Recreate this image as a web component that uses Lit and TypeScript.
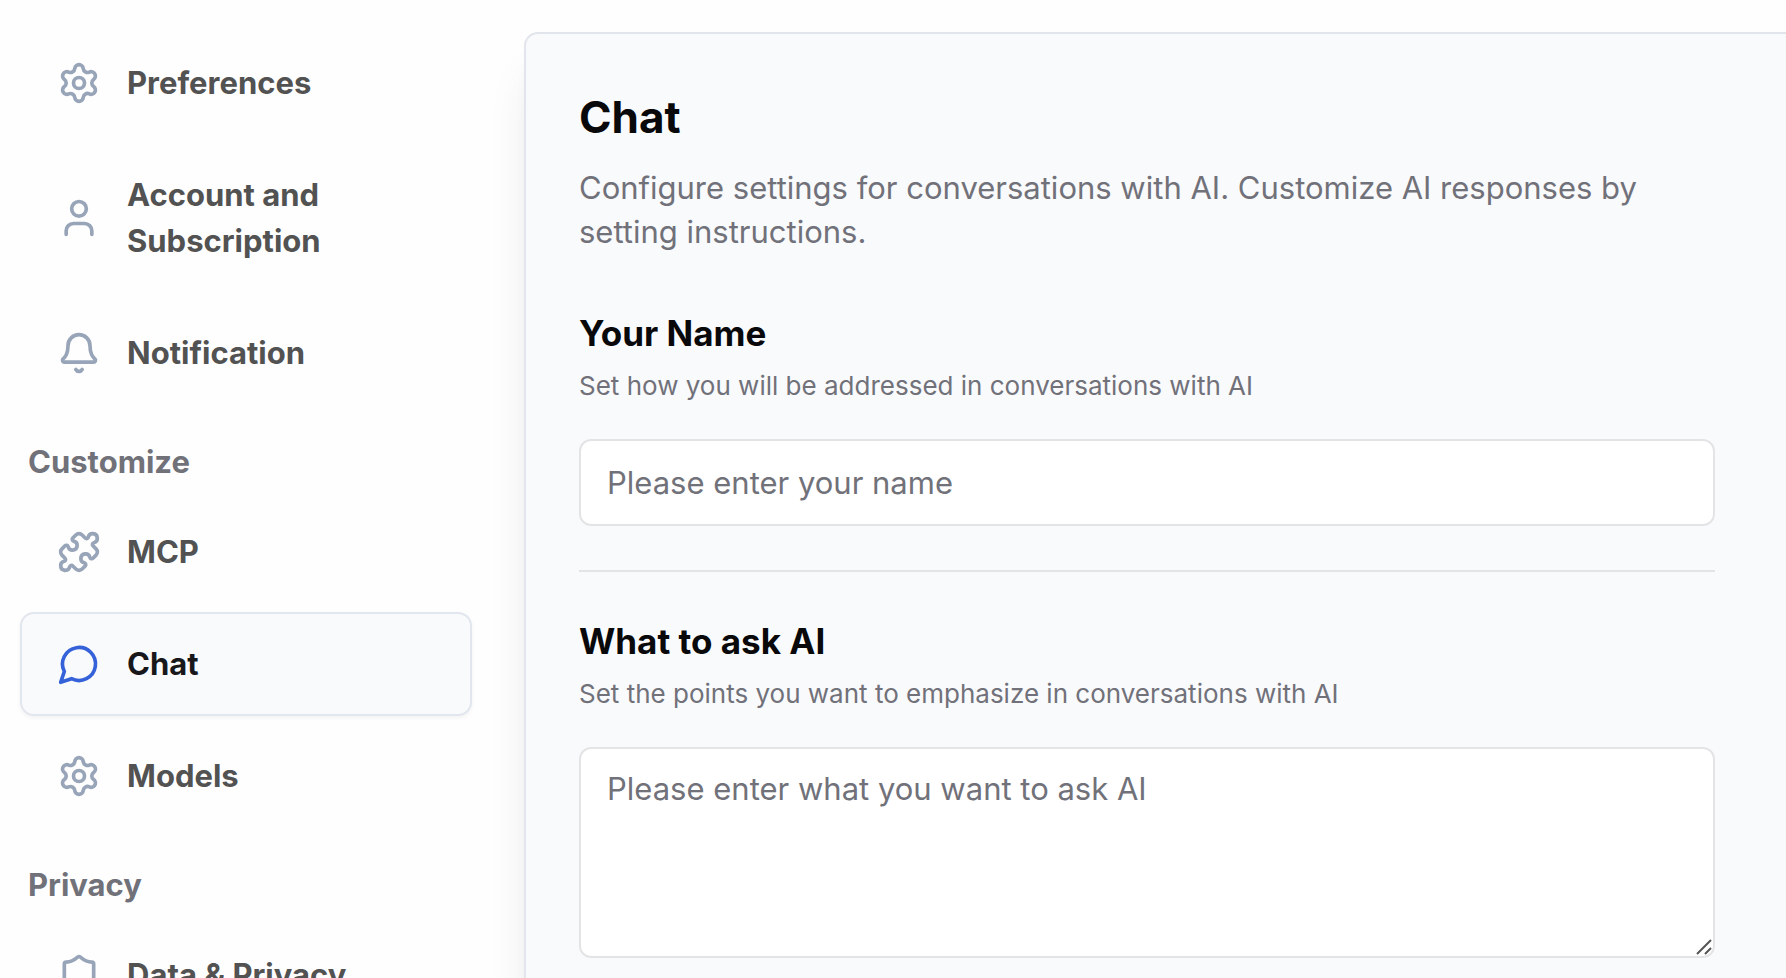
import { LitElement, html, svg, css } from "lit";
import { customElement, state } from "lit/decorators.js";
import { classMap } from "lit/directives/class-map.js";

const icons = {
  settings: svg`<path d="M9.671 4.136a2.34 2.34 0 0 1 4.659 0 2.34 2.34 0 0 0 3.319 1.915 2.34 2.34 0 0 1 2.33 4.033 2.34 2.34 0 0 0 0 3.831 2.34 2.34 0 0 1-2.33 4.033 2.34 2.34 0 0 0-3.319 1.915 2.34 2.34 0 0 1-4.659 0 2.34 2.34 0 0 0-3.32-1.915 2.34 2.34 0 0 1-2.33-4.033 2.34 2.34 0 0 0 0-3.831A2.34 2.34 0 0 1 6.35 6.051a2.34 2.34 0 0 0 3.319-1.915"/><circle cx="12" cy="12" r="3"/>`,
  user: svg`<path d="M19 21v-2a4 4 0 0 0-4-4H9a4 4 0 0 0-4 4v2"/><circle cx="12" cy="7" r="4"/>`,
  bell: svg`<path d="M10.268 21a2 2 0 0 0 3.464 0"/><path d="M3.262 15.326A1 1 0 0 0 4 17h16a1 1 0 0 0 .74-1.673C19.41 13.956 18 12.499 18 8A6 6 0 0 0 6 8c0 4.499-1.411 5.956-2.738 7.326"/>`,
  puzzle: svg`<path d="M15.39 4.39a1 1 0 0 0 1.68-.474 2.5 2.5 0 1 1 3.014 3.015 1 1 0 0 0-.474 1.68l1.683 1.682a2.414 2.414 0 0 1 0 3.414L19.61 15.39a1 1 0 0 1-1.68-.474 2.5 2.5 0 1 0-3.014 3.015 1 1 0 0 1 .474 1.68l-1.683 1.682a2.414 2.414 0 0 1-3.414 0L8.61 19.61a1 1 0 0 0-1.68.474 2.5 2.5 0 1 1-3.014-3.015 1 1 0 0 0 .474-1.68l-1.683-1.682a2.414 2.414 0 0 1 0-3.414L4.39 8.61a1 1 0 0 1 1.68.474 2.5 2.5 0 1 0 3.014-3.015 1 1 0 0 1-.474-1.68l1.683-1.682a2.414 2.414 0 0 1 3.414 0z"/>`,
  message: svg`<path d="M7.9 20A9 9 0 1 0 4 16.1L2 22Z"/>`,
  shield: svg`<path d="M20 13c0 5-3.5 7.5-7.66 8.95a1 1 0 0 1-.67-.01C7.5 20.5 4 18 4 13V6a1 1 0 0 1 1-1c2 0 4.5-1.2 6.24-2.72a1.17 1.17 0 0 1 1.52 0C14.51 3.81 17 5 19 5a1 1 0 0 1 1 1z"/>`,
};

interface Item {
  id: string;
  label: string;
  icon: keyof typeof icons;
}

const groups: { title?: string; items: Item[] }[] = [
  {
    items: [
      { id: "preferences", label: "Preferences", icon: "settings" },
      { id: "account", label: "Account and Subscription", icon: "user" },
      { id: "notification", label: "Notification", icon: "bell" },
    ],
  },
  {
    title: "Customize",
    items: [
      { id: "mcp", label: "MCP", icon: "puzzle" },
      { id: "chat", label: "Chat", icon: "message" },
      { id: "models", label: "Models", icon: "settings" },
    ],
  },
  {
    title: "Privacy",
    items: [{ id: "data-privacy", label: "Data & Privacy", icon: "shield" }],
  },
];

@customElement("settings-nav")
export class SettingsNav extends LitElement {
  @state() private current = "chat";

  static styles = css`
    :host {
      display: block;
    }
    .nav {
      display: flex;
      flex-direction: column;
      gap: 34px;
      padding: 31px 52px 31px 20px;
    }
    .group {
      display: flex;
      flex-direction: column;
      gap: 15px;
    }
    .title {
      margin: 0;
      padding: 0 8px;
      font-size: 31px;
      line-height: 46px;
      font-weight: 700;
      color: #71717a;
    }
    .list {
      display: flex;
      flex-direction: column;
      gap: 8px;
      margin: 0;
      padding: 0;
      list-style: none;
    }
    .item {
      display: flex;
      align-items: center;
      gap: 26px;
      padding: 27px 35px;
      border: 2px solid transparent;
      border-radius: 14px;
      font-size: 31px;
      line-height: 46px;
      font-weight: 700;
      color: #525252;
      text-decoration: none;
    }
    .item.active {
      color: #18181b;
      background: #f9fafc;
      border-color: #e2e6ee;
      box-shadow: 0 2px 4px rgba(0, 0, 0, 0.05);
    }
    .icon {
      flex: none;
      width: 44px;
      height: 44px;
      fill: none;
      stroke: #98a4b8;
      stroke-width: 2;
      stroke-linecap: round;
      stroke-linejoin: round;
    }
    .active .icon {
      stroke: #3662d9;
    }
  `;

  render() {
    return html`<nav class="nav" aria-label="Settings">
      ${groups.map(
        (g) => html`<section class="group">
          ${g.title ? html`<h2 class="title">${g.title}</h2>` : null}
          <ul class="list">
            ${g.items.map(
              (i) => html`<li>
                <a
                  class=${classMap({ item: true, active: i.id === this.current })}
                  href="#${i.id}"
                  @click=${() => (this.current = i.id)}
                  ><svg class="icon" viewBox="0 0 24 24" aria-hidden="true">${icons[i.icon]}</svg
                  ><span>${i.label}</span></a
                >
              </li>`
            )}
          </ul>
        </section>`
      )}
    </nav>`;
  }
}

@customElement("app-root")
export class AppRoot extends LitElement {
  static styles = css`
    :host {
      display: grid;
      grid-template-columns: 524px minmax(0, 1fr);
      height: 100vh;
      overflow: hidden;
      background: #fefefe;
      font-family: Inter, "Liberation Sans", sans-serif;
      color: #09090b;
    }
    .panel {
      margin-top: 32px;
      padding: 52px 71px 52px 53px;
      border: 2px solid #e2e6ec;
      border-width: 2px 0 0 2px;
      border-radius: 14px 0 0 0;
      background: #f9fafc;
      box-shadow:
        0 38px 48px -10px rgba(0, 0, 0, 0.1),
        0 15px 19px -12px rgba(0, 0, 0, 0.1);
    }
    .heading {
      margin: 0;
      font-size: 44px;
      line-height: 62px;
      font-weight: 700;
    }
    .intro {
      margin: 18px 0 56px;
      font-size: 31px;
      line-height: 44px;
      color: #71717a;
    }
    .subheading {
      margin: 0 0 11px;
      font-size: 35px;
      line-height: 46px;
      font-weight: 700;
    }
    .hint {
      margin: 0 0 34px;
      font-size: 26px;
      line-height: 38px;
      color: #71717a;
    }
    .control {
      display: block;
      box-sizing: border-box;
      width: 100%;
      margin: 0;
      padding: 18px 26px;
      border: 2px solid #e4e4e7;
      border-radius: 12px;
      outline: none;
      background: #fff;
      font-family: inherit;
      font-size: 31px;
      line-height: 44px;
      color: #09090b;
    }
    .control::placeholder {
      color: #71717a;
      opacity: 1;
    }
    .single {
      height: 87px;
    }
    .multi {
      height: 211px;
      resize: none;
    }
    .divider {
      height: 2px;
      margin: 44px 0 46px;
      border: 0;
      background: #e4e4e7;
    }
    .area {
      position: relative;
    }
    .grip {
      position: absolute;
      right: 3px;
      bottom: 3px;
      width: 16px;
      height: 16px;
      fill: none;
      stroke: #555;
      stroke-width: 2;
      pointer-events: none;
    }
  `;

  render() {
    return html`
      <settings-nav></settings-nav>
      <main class="panel">
        <h1 class="heading">Chat</h1>
        <p class="intro">
          Configure settings for conversations with AI. Customize AI responses by setting
          instructions.
        </p>
        <section>
          <h2 class="subheading"><label for="name">Your Name</label></h2>
          <p class="hint" id="name-hint">Set how you will be addressed in conversations with AI</p>
          <input
            class="control single"
            id="name"
            type="text"
            aria-describedby="name-hint"
            placeholder="Please enter your name"
          />
        </section>
        <hr class="divider" />
        <section>
          <h2 class="subheading"><label for="ask">What to ask AI</label></h2>
          <p class="hint" id="ask-hint">
            Set the points you want to emphasize in conversations with AI
          </p>
          <div class="area">
            <textarea
              class="control multi"
              id="ask"
              aria-describedby="ask-hint"
              placeholder="Please enter what you want to ask AI"
            ></textarea>
            <svg class="grip" viewBox="0 0 16 16" aria-hidden="true">
              <path d="M1 15 15 1M9 15l6-6" />
            </svg>
          </div>
        </section>
      </main>
    `;
  }
}
